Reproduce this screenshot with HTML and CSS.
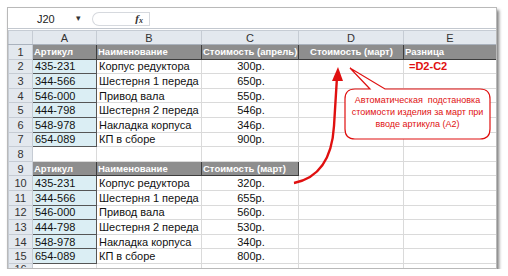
FILE: index.html
```html
<!DOCTYPE html>
<html lang="ru">
<head>
    <meta charset="UTF-8">
    <meta name="viewport" content="width=device-width, initial-scale=1.0">
    <title>Подстановка стоимости</title>
    <link rel="stylesheet" href="styles.css">
</head>
<body>
    <div class="sheet">
        <div class="formula-bar">
            <div class="name-box">J20<span class="drop">&#9662;</span></div>
            <div class="fx-box"><span class="fx">f<sub>x</sub></span></div>
            <div class="formula"></div>
        </div>

        <table class="grid">
            <colgroup>
                <col class="c-num"><col class="c-a"><col class="c-b"><col class="c-c"><col class="c-d"><col class="c-e">
            </colgroup>
            <tr class="col-heads"><th class="corner"></th><th>A</th><th>B</th><th>C</th><th>D</th><th>E</th></tr>
            <tr><th>1</th><td class="head">Артикул</td><td class="head">Наименование</td><td class="head">Стоимость (апрель)</td><td class="head center">Стоимость (март)</td><td class="head">Разница</td></tr>
            <tr><th>2</th><td class="key">435-231</td><td>Корпус редуктора</td><td class="price">300р.</td><td></td><td class="formula-cell">=D2-C2</td></tr>
            <tr><th>3</th><td class="key">344-566</td><td>Шестерня 1 переда</td><td class="price">650р.</td><td></td><td></td></tr>
            <tr><th>4</th><td class="key">546-000</td><td>Привод вала</td><td class="price">550р.</td><td></td><td></td></tr>
            <tr><th>5</th><td class="key">444-798</td><td>Шестерня 2 переда</td><td class="price">546р.</td><td></td><td></td></tr>
            <tr><th>6</th><td class="key">548-978</td><td>Накладка корпуса</td><td class="price">346р.</td><td></td><td></td></tr>
            <tr><th>7</th><td class="key">654-089</td><td>КП в сборе</td><td class="price">900р.</td><td></td><td></td></tr>
            <tr><th>8</th><td></td><td></td><td></td><td></td><td></td></tr>
            <tr><th>9</th><td class="head">Артикул</td><td class="head">Наименование</td><td class="head">Стоимость (март)</td><td></td><td></td></tr>
            <tr><th>10</th><td class="key">435-231</td><td>Корпус редуктора</td><td class="price">320р.</td><td></td><td></td></tr>
            <tr><th>11</th><td class="key">344-566</td><td>Шестерня 1 переда</td><td class="price">655р.</td><td></td><td></td></tr>
            <tr><th>12</th><td class="key">546-000</td><td>Привод вала</td><td class="price">560р.</td><td></td><td></td></tr>
            <tr><th>13</th><td class="key">444-798</td><td>Шестерня 2 переда</td><td class="price">530р.</td><td></td><td></td></tr>
            <tr><th>14</th><td class="key">548-978</td><td>Накладка корпуса</td><td class="price">340р.</td><td></td><td></td></tr>
            <tr><th>15</th><td class="key">654-089</td><td>КП в сборе</td><td class="price">800р.</td><td></td><td></td></tr>
            <tr class="last"><th>16</th><td></td><td></td><td></td><td></td><td></td></tr>
        </table>

        <!-- annotation drawn over the sheet -->
        <svg class="notes" width="490" height="262" viewBox="7 7 490 262">
            <path d="M354,88 H369 L349,67 L384,88 H479 Q489,88 489,98 V128 Q489,138 479,138 H354 Q344,138 344,128 V98 Q344,88 354,88 Z"
                  fill="#fff" stroke="#e01010" stroke-width="1.2"/>
            <path d="M293,182 C318,177 331,158 333,125 L336,76" fill="none" stroke="#e01010" stroke-width="2.4"/>
            <path d="M337,66 L331,80 L342,80 Z" fill="#e01010"/>
        </svg>
        <div class="callout-text">
            Автоматическая&nbsp; подстановка<br>
            стоимости изделия за март при<br>
            вводе артикула (А2)
        </div>
    </div>
</body>
</html>
```

FILE: styles.css
```css
body {
    margin: 0;
    background-color: #fff;
    font-family: "Liberation Sans", Arial, sans-serif;
}

.sheet {
    position: relative;
    width: 488px;
    height: 260px;
    margin: 7px 0 0 7px;
    border: 1px solid #b9b9b9;
    background-color: #fff;
    box-shadow: 2px 3px 3px rgba(0, 0, 0, 0.5);
    overflow: hidden;
}

.formula-bar {
    display: flex;
    align-items: center;
    height: 19px;
    padding-top: 1px;
    border-bottom: 1px solid #c3c8cf;
    margin-bottom: 1px;
    font-size: 11px;
    color: #222;
}

.name-box {
    width: 84px;
    padding-left: 29px;
    box-sizing: border-box;
    display: flex;
    justify-content: space-between;
}

.drop {
    font-size: 9px;
    color: #333;
    margin-right: 11px;
}

.fx-box {
    width: 57px;
    height: 14px;
    border: 1px solid #d6d9de;
    border-right: none;
    border-radius: 8px 0 0 8px;
    display: flex;
    justify-content: flex-end;
    align-items: center;
    padding-right: 6px;
    box-sizing: border-box;
}

.fx {
    font-family: "Liberation Serif", serif;
    font-style: italic;
    font-weight: bold;
    font-size: 11px;
    color: #333;
}

.fx sub {
    font-size: 8px;
    vertical-align: -1px;
}

.formula {
    flex: 1;
    height: 14px;
    border-left: 1px solid #d6d9de;
}

.grid {
    border-collapse: collapse;
    table-layout: fixed;
    width: 488px;
    font-size: 11px;
    color: #111;
}

.c-num { width: 24px; }
.c-a { width: 64px; }
.c-b { width: 105px; }
.c-c { width: 97px; }
.c-d { width: 105px; }
.c-e { width: 93px; }

.grid tr {
    height: 14.6px;
}

.grid tr.col-heads {
    height: 14px;
}

.grid th {
    background-color: #e3e8ee;
    font-weight: normal;
    color: #333;
    border: 1px solid #c6ccd4;
    padding: 0;
    text-align: center;
    line-height: 12px;
}

.col-heads th {
    border-bottom-color: #aab2bd;
}

.grid tr.last th {
    vertical-align: top;
    line-height: 10px;
}

.grid td {
    border: 1px solid #dadada;
    padding: 0 0 0 2px;
    white-space: nowrap;
    overflow: hidden;
    line-height: 12px;
}

.grid td.head {
    background-color: #8e8e8e;
    color: #fff;
    font-weight: bold;
    font-size: 9.5px;
    padding-left: 1px;
    border: 1px solid #3d3d3d;
}

.grid td.center {
    text-align: center;
}

.grid td.key {
    background-color: #dbeef4;
    border: 1px solid #555;
}

.grid td.price {
    text-align: center;
}

.grid td.formula-cell {
    color: #e01010;
    font-weight: bold;
    font-size: 11px;
    padding-left: 5px;
}

.notes {
    position: absolute;
    left: 0;
    top: 0;
}

.callout-text {
    position: absolute;
    left: 337px;
    top: 86px;
    width: 145px;
    text-align: center;
    font-size: 9px;
    line-height: 12px;
    color: #e01010;
}
```
